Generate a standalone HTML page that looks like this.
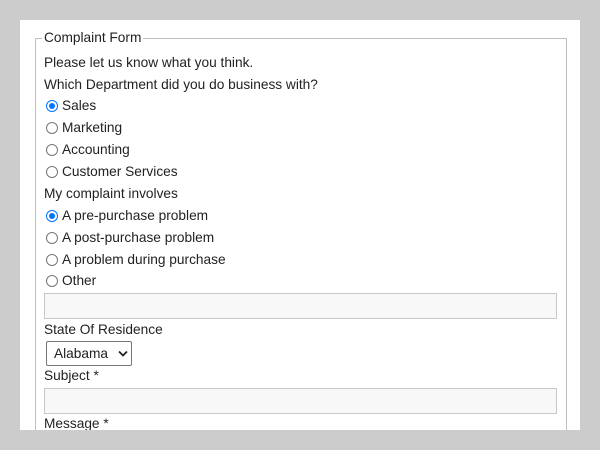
<!DOCTYPE html>
<html><head><style>
html,body{margin:0;padding:0;background:#cccccc;width:600px;height:450px;overflow:hidden}
.panel{position:absolute;left:20px;top:20px;width:560px;height:410px;background:#fff;overflow:hidden}
.fs{position:absolute;left:15px;top:18px;width:530px;height:400px;border:1px solid #c0c0c0;border-bottom:none}
.t{position:absolute;font-family:"Liberation Sans",Arial,sans-serif;font-size:13.7px;color:#222;white-space:nowrap;line-height:16px}
.legend{background:#fff;padding:0 2px}
.r{position:absolute;width:12px;height:12px;border:1px solid #767676;border-radius:50%;box-sizing:border-box;background:#fff}
.r.on{border:1px solid #0075ff}
.r.on::after{content:"";position:absolute;left:2px;top:2px;width:6px;height:6px;border-radius:50%;background:#0075ff}
.in{position:absolute;left:24px;width:513px;height:26px;border:1px solid #c8c8c8;box-sizing:border-box;background:#f8f8f8}
.sel{position:absolute;left:26px;top:321px;width:86px;height:25px;border:1px solid #767676;border-radius:2px;box-sizing:border-box;background:#fff}
</style></head><body>
<div class="panel">
<div class="fs"></div>
<div class="t legend" style="left:22px;top:10px">Complaint Form</div>
<div class="t" style="left:24px;top:35px">Please let us know what you think.</div>
<div class="t" style="left:24px;top:57px">Which Department did you do business with?</div>
<div class="r on" style="left:26px;top:80px"></div><div class="t" style="left:42px;top:78px">Sales</div>
<div class="r" style="left:26px;top:102px"></div><div class="t" style="left:42px;top:100px">Marketing</div>
<div class="r" style="left:26px;top:124px"></div><div class="t" style="left:42px;top:122px">Accounting</div>
<div class="r" style="left:26px;top:146px"></div><div class="t" style="left:42px;top:144px">Customer Services</div>
<div class="t" style="left:24px;top:166px">My complaint involves</div>
<div class="r on" style="left:26px;top:190px"></div><div class="t" style="left:42px;top:188px">A pre-purchase problem</div>
<div class="r" style="left:26px;top:212px"></div><div class="t" style="left:42px;top:210px">A post-purchase problem</div>
<div class="r" style="left:26px;top:234px"></div><div class="t" style="left:42px;top:232px">A problem during purchase</div>
<div class="r" style="left:26px;top:255px"></div><div class="t" style="left:42px;top:253px">Other</div>
<div class="in" style="top:273px"></div>
<div class="t" style="left:24px;top:302px">State Of Residence</div>
<div class="sel"></div>
<div class="t" style="left:34px;top:326px">Alabama</div>
<svg style="position:absolute;left:98px;top:330px" width="10" height="7" viewBox="0 0 10 7"><path d="M1 1.5L5 5.5L9 1.5" fill="none" stroke="#222" stroke-width="1.8"/></svg>
<div class="t" style="left:24px;top:348px">Subject *</div>
<div class="in" style="top:368px"></div>
<div class="t" style="left:24px;top:396px">Message *</div>
</div>
</body></html>
